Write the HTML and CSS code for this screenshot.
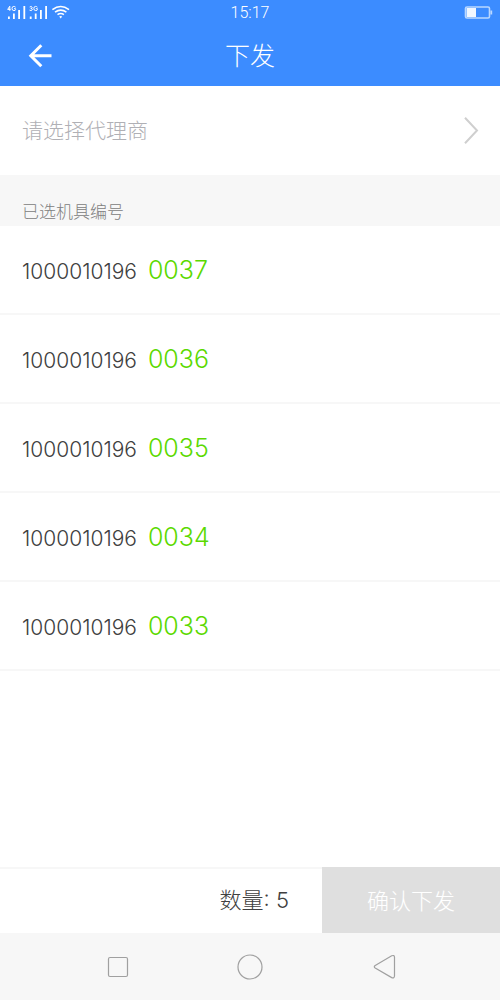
FILE: index.html
```html
<!DOCTYPE html>
<html lang="zh-CN">
<head>
<meta charset="utf-8">
<meta name="viewport" content="width=device-width, initial-scale=1">
<title>下发</title>
<link rel="stylesheet" href="styles.css">
</head>
<body>
<div class="app">
  <div class="status">
    <div class="signals">
      <svg class="signal-icon" viewBox="0 0 64 16" width="64" height="16" aria-hidden="true">
        <g fill="none" stroke="currentColor" stroke-width="1">
          <path d="M2.8 1.2 L.7 4.4 H3.6 M2.8 1.2 V5.8"/>
          <path d="M8.6 2.2 Q7.8 1.4 6.8 1.4 Q5 1.4 5 3.5 Q5 5.6 6.9 5.6 Q8.5 5.6 8.6 4.6 V3.7 H7"/>
          <path d="M22.7 2 Q24.8 .7 25.2 2.4 Q25.2 3.4 23.8 3.4 Q25.6 3.5 25.3 4.8 Q24.6 6.3 22.5 5.1"/>
          <path d="M30.4 2.2 Q29.6 1.4 28.6 1.4 Q26.8 1.4 26.8 3.5 Q26.8 5.6 28.7 5.6 Q30.3 5.6 30.4 4.6 V3.7 H28.8"/>
        </g>
        <path fill="currentColor" d="M1 11.6h1.8V14H1z M6 8.6h1.8V14H6z M11.2 5H13v9h-1.8z M16.4 1h1.8v13h-1.8z M22.8 11.6h1.8V14h-1.8z M27.8 8.6h1.8V14h-1.8z M33 5h1.8v9H33z M38.2 1H40v13h-1.8z"/>
        <g fill="none" stroke="currentColor" stroke-width="1.6">
          <path d="M45.4 4.6 Q53.7 -1.6 62 4.6"/>
          <path d="M48 7.2 Q53.7 3 59.4 7.2"/>
          <path d="M50.5 9.7 Q53.7 7.3 56.9 9.7"/>
        </g>
        <path fill="currentColor" d="M52.2 11.6 Q53.7 10.6 55.2 11.6 L53.7 13.6z"/>
      </svg>
    </div>
    <time class="clock">15:17</time>
    <div class="battery">
      <svg viewBox="0 0 30 14" width="30" height="14" aria-hidden="true">
        <rect x="2.5" y="1" width="24" height="11" rx="1.5" fill="none" stroke="#b9d7ff" stroke-width="1.6"/>
        <rect x="3.6" y="2" width="9.4" height="9" fill="#f1f7ff"/>
        <path d="M27.4 4.5h1.8v4h-1.8z" fill="#b9d7ff"/>
      </svg>
    </div>
  </div>
  <header class="header">
    <button class="back" type="button" aria-label="返回">
      <svg viewBox="0 0 24 24" width="24" height="24" aria-hidden="true"><path d="M23.5 11.8H3 M13.3 1.3 L2.8 11.8 L13.3 22.3" fill="none" stroke="currentColor" stroke-width="3"/></svg>
    </button>
    <h1 class="title">下发</h1>
  </header>
  <main class="content">
    <button class="agent" type="button">
      <span>请选择代理商</span>
      <svg viewBox="0 0 16 30" width="16" height="30" aria-hidden="true"><path d="M2 3.7 L14 16.5 L2 29.3" fill="none" stroke="#cfcfcf" stroke-width="2"/></svg>
    </button>
    <h2 class="section-title">已选机具编号</h2>
    <ul class="list">
      <li class="row"><span class="prefix">1000010196</span><span class="suffix">0037</span></li>
      <li class="row"><span class="prefix">1000010196</span><span class="suffix">0036</span></li>
      <li class="row"><span class="prefix">1000010196</span><span class="suffix">0035</span></li>
      <li class="row"><span class="prefix">1000010196</span><span class="suffix">0034</span></li>
      <li class="row"><span class="prefix">1000010196</span><span class="suffix">0033</span></li>
    </ul>
  </main>
  <footer class="summary">
    <div class="count">数量: 5</div>
    <button class="confirm" type="button" disabled>确认下发</button>
  </footer>
  <nav class="system-nav">
    <button class="nav-button" type="button" aria-label="最近任务"><svg viewBox="0 0 28 28" width="28" height="28"><rect x="6.5" y="4.5" width="19" height="19" rx="1.5"/></svg></button>
    <button class="nav-button" type="button" aria-label="主屏幕"><svg viewBox="0 0 28 28" width="28" height="28"><circle cx="14" cy="14" r="12"/></svg></button>
    <button class="nav-button" type="button" aria-label="返回上级"><svg viewBox="0 0 28 28" width="28" height="28"><path d="M5.2 12.4 L21.7 2.8 Q24.3 1.8 24.5 4 V23 Q24.3 25.6 21.7 24.6 L5.2 15 Q3.4 13.7 5.2 12.4z"/></svg></button>
  </nav>
</div>
</body>
</html>
```
FILE: styles.css
```css
* {
  box-sizing: border-box;
}

body {
  margin: 0;
  background: #fff;
  color: #404040;
  font-family: Inter, "Noto Sans CJK SC", sans-serif;
  font-weight: 300;
}

button {
  margin: 0;
  padding: 0;
  border: 0;
  background: none;
  color: inherit;
  font: inherit;
}

svg {
  display: block;
}

.app {
  display: flex;
  flex-direction: column;
  min-height: 100vh;
}

.status {
  display: grid;
  grid-template-columns: 1fr auto 1fr;
  align-items: center;
  height: 26px;
  padding: 0 7px;
  background: #3c8cff;
  color: #fff;
}

.clock {
  font-family: Roboto, sans-serif;
  font-size: 16px;
  line-height: 26px;
}

.battery {
  justify-self: end;
}

.header {
  display: grid;
  grid-template-columns: 1fr auto 1fr;
  align-items: center;
  height: 60px;
  padding: 0 28px;
  background: #3c8cff;
  color: #fff;
}

.back {
  justify-self: start;
}

.title {
  margin: 0;
  font-size: 25px;
  font-weight: 300;
  line-height: 60px;
}

.content {
  flex: 1;
}

.agent {
  display: flex;
  align-items: center;
  justify-content: space-between;
  width: 100%;
  height: 89px;
  padding: 0 21px 3px 22px;
  color: #b0b0b5;
  font-size: 21px;
}

.section-title {
  margin: 0;
  height: 51px;
  padding: 25px 22px 0;
  background: #f7f7f7;
  color: #808080;
  font-size: 17px;
  font-weight: 300;
  line-height: 24px;
}

.list {
  margin: 0;
  padding: 0;
  list-style: none;
}

.row {
  display: flex;
  align-items: baseline;
  gap: 11px;
  height: 89px;
  padding: 24px 22px;
  border-bottom: 2px solid #f7f7f7;
  line-height: 40px;
}

.prefix {
  font-size: 21px;
}

.suffix {
  color: #5bd900;
  font-size: 25px;
}

.summary {
  display: flex;
  height: 66px;
  font-size: 22px;
}

.count {
  flex: 1;
  padding-right: 33px;
  border-top: 2px solid #f7f7f7;
  line-height: 62px;
  text-align: right;
}

.confirm {
  width: 178px;
  padding-bottom: 3px;
  background: #dfdfdf;
  color: #fff;
}

.system-nav {
  display: flex;
  align-items: center;
  justify-content: center;
  gap: 106px;
  height: 67px;
  background: #f7f7f7;
}

.nav-button svg {
  fill: none;
  stroke: #a0a0a0;
  stroke-width: 1.2;
}
```
